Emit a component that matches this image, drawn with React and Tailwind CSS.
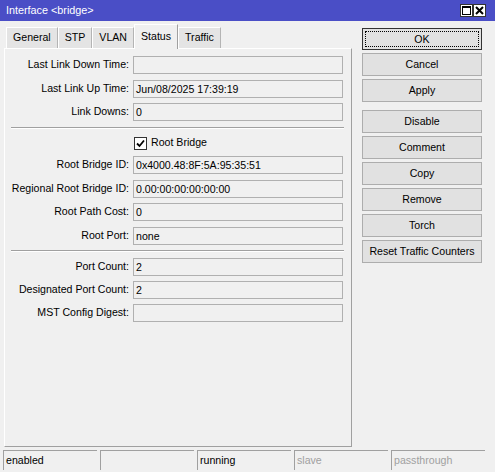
import { useState } from 'react';

const font = { fontFamily: '"Liberation Sans", Arial, sans-serif' };

const tabs = ['General', 'STP', 'VLAN', 'Status', 'Traffic'];

function Field({ label, value }) {
    return (
        <div className="flex items-center h-[18px]">
            <div className="w-[124px] text-right whitespace-nowrap">{label}</div>
            <div className="ml-[4px] w-[210px] h-[18px] border border-[#b0b0b0] bg-[#f0f0f0] pl-[2px] leading-[16px] whitespace-nowrap overflow-hidden">
                {value}
            </div>
        </div>
    );
}

function Separator({ className = '' }) {
    return (
        <div className={`ml-[6px] w-[333px] ${className}`}>
            <div className="h-px bg-[#a0a0a0]" />
            <div className="h-px bg-white" />
        </div>
    );
}

function Btn({ children, main }) {
    if (main) {
        return (
            <button className="w-[120px] h-[22px] border border-[#333] bg-[#e1e1e1] p-[2px]">
                <div className="h-full border border-dotted border-black flex items-center justify-center leading-none">
                    {children}
                </div>
            </button>
        );
    }
    return (
        <button className="w-[120px] h-[23px] border border-[#adadad] bg-[#e1e1e1] flex items-center justify-center leading-none">
            {children}
        </button>
    );
}

export default function App() {
    const [active, setActive] = useState('Status');

    return (
        <div className="w-[495px] h-[472px] bg-[#f0f0f0] text-[10.6px] text-black flex flex-col" style={font}>
            {/* title bar */}
            <div className="h-[21px] bg-[#4a4ec6] flex items-center justify-between pl-[6px] pr-[9px]">
                <span className="text-white leading-none text-[10.8px]">Interface &lt;bridge&gt;</span>
                <div className="flex">
                    <div className="w-[13px] h-[13px] bg-white border border-[#333] flex items-center justify-center">
                        <svg width="9" height="9" viewBox="0 0 9 9">
                            <rect x="0.5" y="0.5" width="8" height="8" fill="none" stroke="#000" />
                            <rect x="0" y="0" width="9" height="2" fill="#000" />
                        </svg>
                    </div>
                    <div className="w-[13px] h-[13px] bg-white border border-[#333] flex items-center justify-center">
                        <svg width="9" height="9" viewBox="0 0 9 9">
                            <path d="M1 1 L8 8 M8 1 L1 8" stroke="#000" strokeWidth="2" />
                        </svg>
                    </div>
                </div>
            </div>

            <div className="flex flex-1">
                {/* left side: tabs + panel */}
                <div className="pl-[4px] flex flex-col">
                    <div className="h-[27px] flex items-end pl-[2px]">
                        {tabs.map((t) =>
                            t === active ? (
                                <div
                                    key={t}
                                    className="h-[25px] px-[6px] bg-[#f0f0f0] border-t border-l border-white border-r border-r-[#a0a0a0] flex items-center -mb-px relative z-10 cursor-default"
                                >
                                    {t}
                                </div>
                            ) : (
                                <div
                                    key={t}
                                    onClick={() => setActive(t)}
                                    className="h-[21px] px-[6px] bg-[#e4e4e4] border-t border-l border-white border-r border-r-[#b4b4b4] flex items-center cursor-default"
                                >
                                    {t}
                                </div>
                            )
                        )}
                    </div>
                    <div className="w-[348px] h-[399px] border-t border-l border-white border-r border-b border-r-[#a0a0a0] border-b-[#a0a0a0] flex flex-col pt-[7px]">
                        <div className="flex flex-col gap-[5.5px]">
                            <Field label="Last Link Down Time:" value="" />
                            <Field label="Last Link Up Time:" value="Jun/08/2025 17:39:19" />
                            <Field label="Link Downs:" value="0" />
                        </div>
                        <Separator className="mt-[6px]" />
                        <div className="mt-[7px] h-[14px] flex items-center pl-[129px]">
                            <div className="w-[13px] h-[13px] bg-white border border-[#333] flex items-center justify-center">
                                <svg width="9" height="9" viewBox="0 0 9 9">
                                    <path d="M1 4.5 L3.5 7 L8 1.5" fill="none" stroke="#000" strokeWidth="1.8" />
                                </svg>
                            </div>
                            <span className="ml-[4px]">Root Bridge</span>
                        </div>
                        <div className="mt-[6px] flex flex-col gap-[5.5px]">
                            <Field label="Root Bridge ID:" value="0x4000.48:8F:5A:95:35:51" />
                            <Field label="Regional Root Bridge ID:" value="0.00:00:00:00:00:00" />
                            <Field label="Root Path Cost:" value="0" />
                            <Field label="Root Port:" value="none" />
                        </div>
                        <Separator className="mt-[5px]" />
                        <div className="mt-[6px] flex flex-col gap-[5px]">
                            <Field label="Port Count:" value="2" />
                            <Field label="Designated Port Count:" value="2" />
                            <Field label="MST Config Digest:" value="" />
                        </div>
                    </div>
                </div>

                {/* right side: buttons */}
                <div className="ml-[10px] pt-[7px] flex flex-col">
                    <div className="flex flex-col gap-[3px]">
                        <Btn main>OK</Btn>
                        <Btn>Cancel</Btn>
                        <Btn>Apply</Btn>
                    </div>
                    <div className="mt-[8px] flex flex-col gap-[3px]">
                        <Btn>Disable</Btn>
                        <Btn>Comment</Btn>
                        <Btn>Copy</Btn>
                        <Btn>Remove</Btn>
                        <Btn>Torch</Btn>
                        <Btn>Reset Traffic Counters</Btn>
                    </div>
                </div>
            </div>

            {/* status bar */}
            <div className="h-[20px] mt-[3px] mb-[2px] pl-[3px] flex gap-[3px]">
                {[
                    ['enabled', false],
                    ['', false],
                    ['running', false],
                    ['slave', true],
                    ['passthrough', true],
                ].map(([t, dim], i) => (
                    <div
                        key={i}
                        className={`w-[94px] h-full border-t border-l border-[#a0a0a0] pl-[2px] flex items-center ${dim ? 'text-[#a0a0a0]' : ''}`}
                    >
                        {t}
                    </div>
                ))}
            </div>
        </div>
    );
}
